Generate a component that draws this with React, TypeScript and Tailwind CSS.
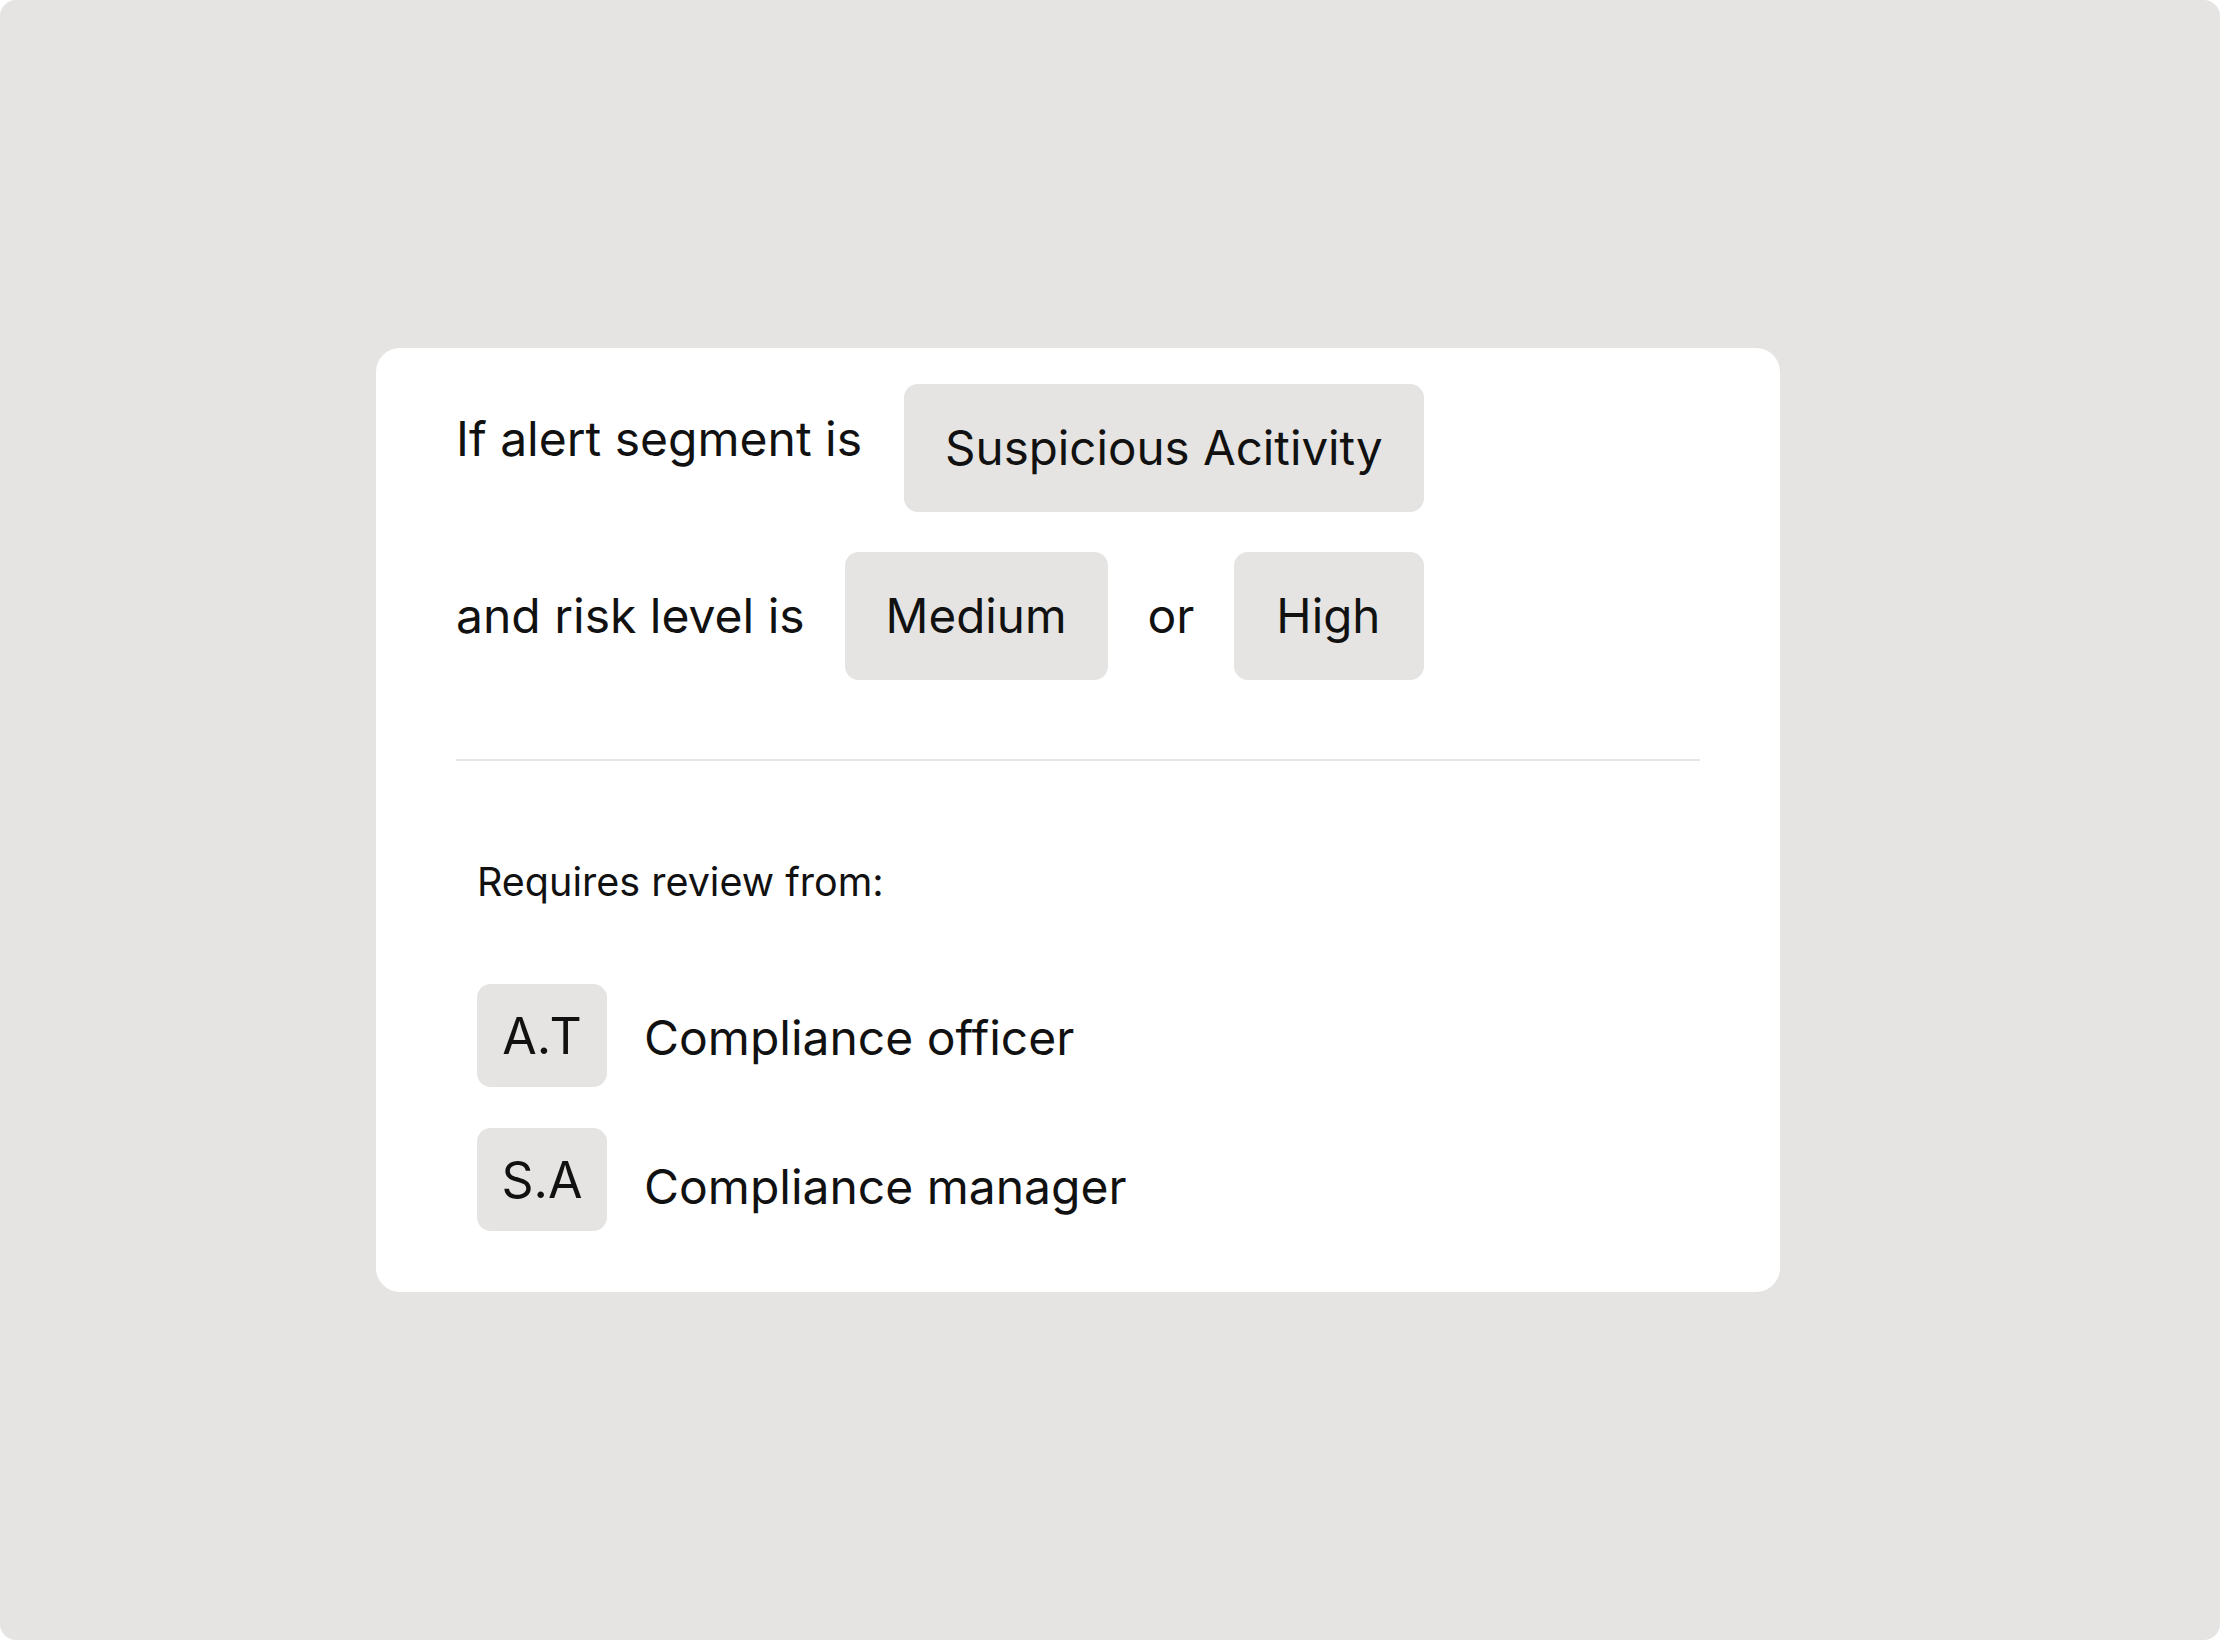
export default function App() {
  const font = { fontFamily: "Inter, 'Noto Sans', sans-serif" };
  return (
    <div className="bg-white w-[2220px] h-[1640px]">
      <div
        className="w-[2220px] h-[1640px] rounded-[16px] bg-[#e5e4e2] pl-[376px] pt-[348px] text-[#111111]"
        style={font}
      >
        <div className="w-[1404px] h-[944px] rounded-[24px] bg-white pt-[36px] px-[80px]">
          <div className="flex items-center gap-[42px]">
            <div className="text-[48px] leading-[56px] -mt-[18px]">If alert segment is</div>
            <div className="h-[128px] px-[41px] rounded-[14px] bg-[#e5e4e2] flex items-center text-[47.5px] leading-[56px]">
              Suspicious Acitivity
            </div>
          </div>
          <div className="flex items-center gap-[40px] mt-[40px]">
            <div className="text-[48px] leading-[56px]">and risk level is</div>
            <div className="h-[128px] px-[41px] rounded-[14px] bg-[#e5e4e2] flex items-center text-[47.5px] leading-[56px]">
              Medium
            </div>
            <div className="text-[48px] leading-[56px]">or</div>
            <div className="h-[128px] pl-[42px] pr-[44px] rounded-[14px] bg-[#e5e4e2] flex items-center text-[47.5px] leading-[56px]">
              High
            </div>
          </div>
          <div className="mt-[79px] h-[2px] bg-[#e6e6e6]" />
          <div className="pl-[21px]">
            <div className="mt-[98px] text-[39.5px] leading-[46px]">Requires review from:</div>
            <div className="mt-[79px] flex items-center gap-[37px]">
              <div className="w-[130px] h-[103px] rounded-[14px] bg-[#e5e4e2] flex items-center justify-center text-[50px] leading-[60px]">
                A.T
              </div>
              <div className="text-[48px] leading-[58px] mt-[4px]">Compliance officer</div>
            </div>
            <div className="mt-[41px] flex items-center gap-[37px]">
              <div className="w-[130px] h-[103px] rounded-[14px] bg-[#e5e4e2] flex items-center justify-center text-[50px] leading-[60px]">
                S.A
              </div>
              <div className="text-[48px] leading-[58px] mt-[14px]">Compliance manager</div>
            </div>
          </div>
        </div>
      </div>
    </div>
  );
}
